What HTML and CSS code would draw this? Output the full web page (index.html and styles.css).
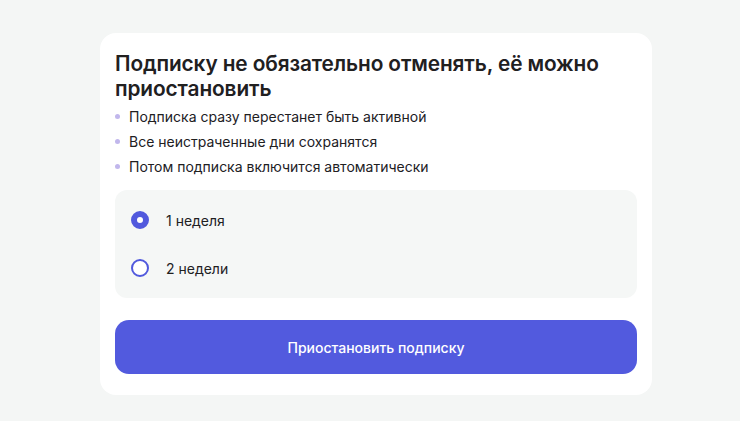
FILE: index.html
```html
<!DOCTYPE html>
<html lang="ru">
<head>
<meta charset="utf-8">
<link rel="stylesheet" href="styles.css">
</head>
<body>
<div class="card">
  <h1 class="title">Подписку не обязательно отменять, её можно приостановить</h1>
  <ul class="list">
    <li>Подписка сразу перестанет быть активной</li>
    <li>Все неистраченные дни сохранятся</li>
    <li>Потом подписка включится автоматически</li>
  </ul>
  <div class="options">
    <label class="option"><span class="radio checked"></span><span class="opt-text">1 неделя</span></label>
    <label class="option"><span class="radio"></span><span class="opt-text">2 недели</span></label>
  </div>
  <button class="btn">Приостановить подписку</button>
</div>
</body>
</html>
```
FILE: styles.css
```css
html, body { margin: 0; padding: 0; }
body {
  background: #f4f6f5;
  font-family: Inter, "Open Sans", "Noto Sans", sans-serif;
  color: #21201f;
  width: 740px;
  height: 421px;
  overflow: hidden;
}
.card {
  box-sizing: border-box;
  width: 552px;
  margin: 33px 0 0 100px;
  background: #ffffff;
  border-radius: 16px;
  padding: 18px 15px 21px 15px;
}
.title {
  margin: 0;
  font-size: 20.8px;
  font-weight: 600;
  line-height: 25px;
  letter-spacing: -0.1px;
}
.list {
  list-style: none;
  margin: 3px 0 0 0;
  padding: 0;
}
.list li {
  position: relative;
  padding-left: 14px;
  font-size: 14px;
  line-height: 25px;
}
.list li::before {
  content: "";
  position: absolute;
  left: 0;
  top: 10px;
  width: 5px;
  height: 5px;
  border-radius: 50%;
  background: #c1b7ec;
}
.options {
  margin-top: 11px;
  background: #f5f7f6;
  border-radius: 12px;
  padding: 6px 16px 6px;
  display: flex;
  flex-direction: column;
}
.option {
  display: flex;
  align-items: center;
  height: 48px;
  gap: 17px;
  font-size: 14px;
}
.radio {
  box-sizing: border-box;
  width: 18px;
  height: 18px;
  border-radius: 50%;
  border: 2px solid #5159dd;
  background: #ffffff;
  flex: none;
}
.radio.checked {
  border: 6px solid #5159dd;
}
.btn {
  display: block;
  width: 100%;
  height: 54px;
  margin-top: 22px;
  border: none;
  border-radius: 14px;
  background: #525ade;
  color: #ffffff;
  font-family: inherit;
  font-size: 14px;
  font-weight: 500;
}
```
